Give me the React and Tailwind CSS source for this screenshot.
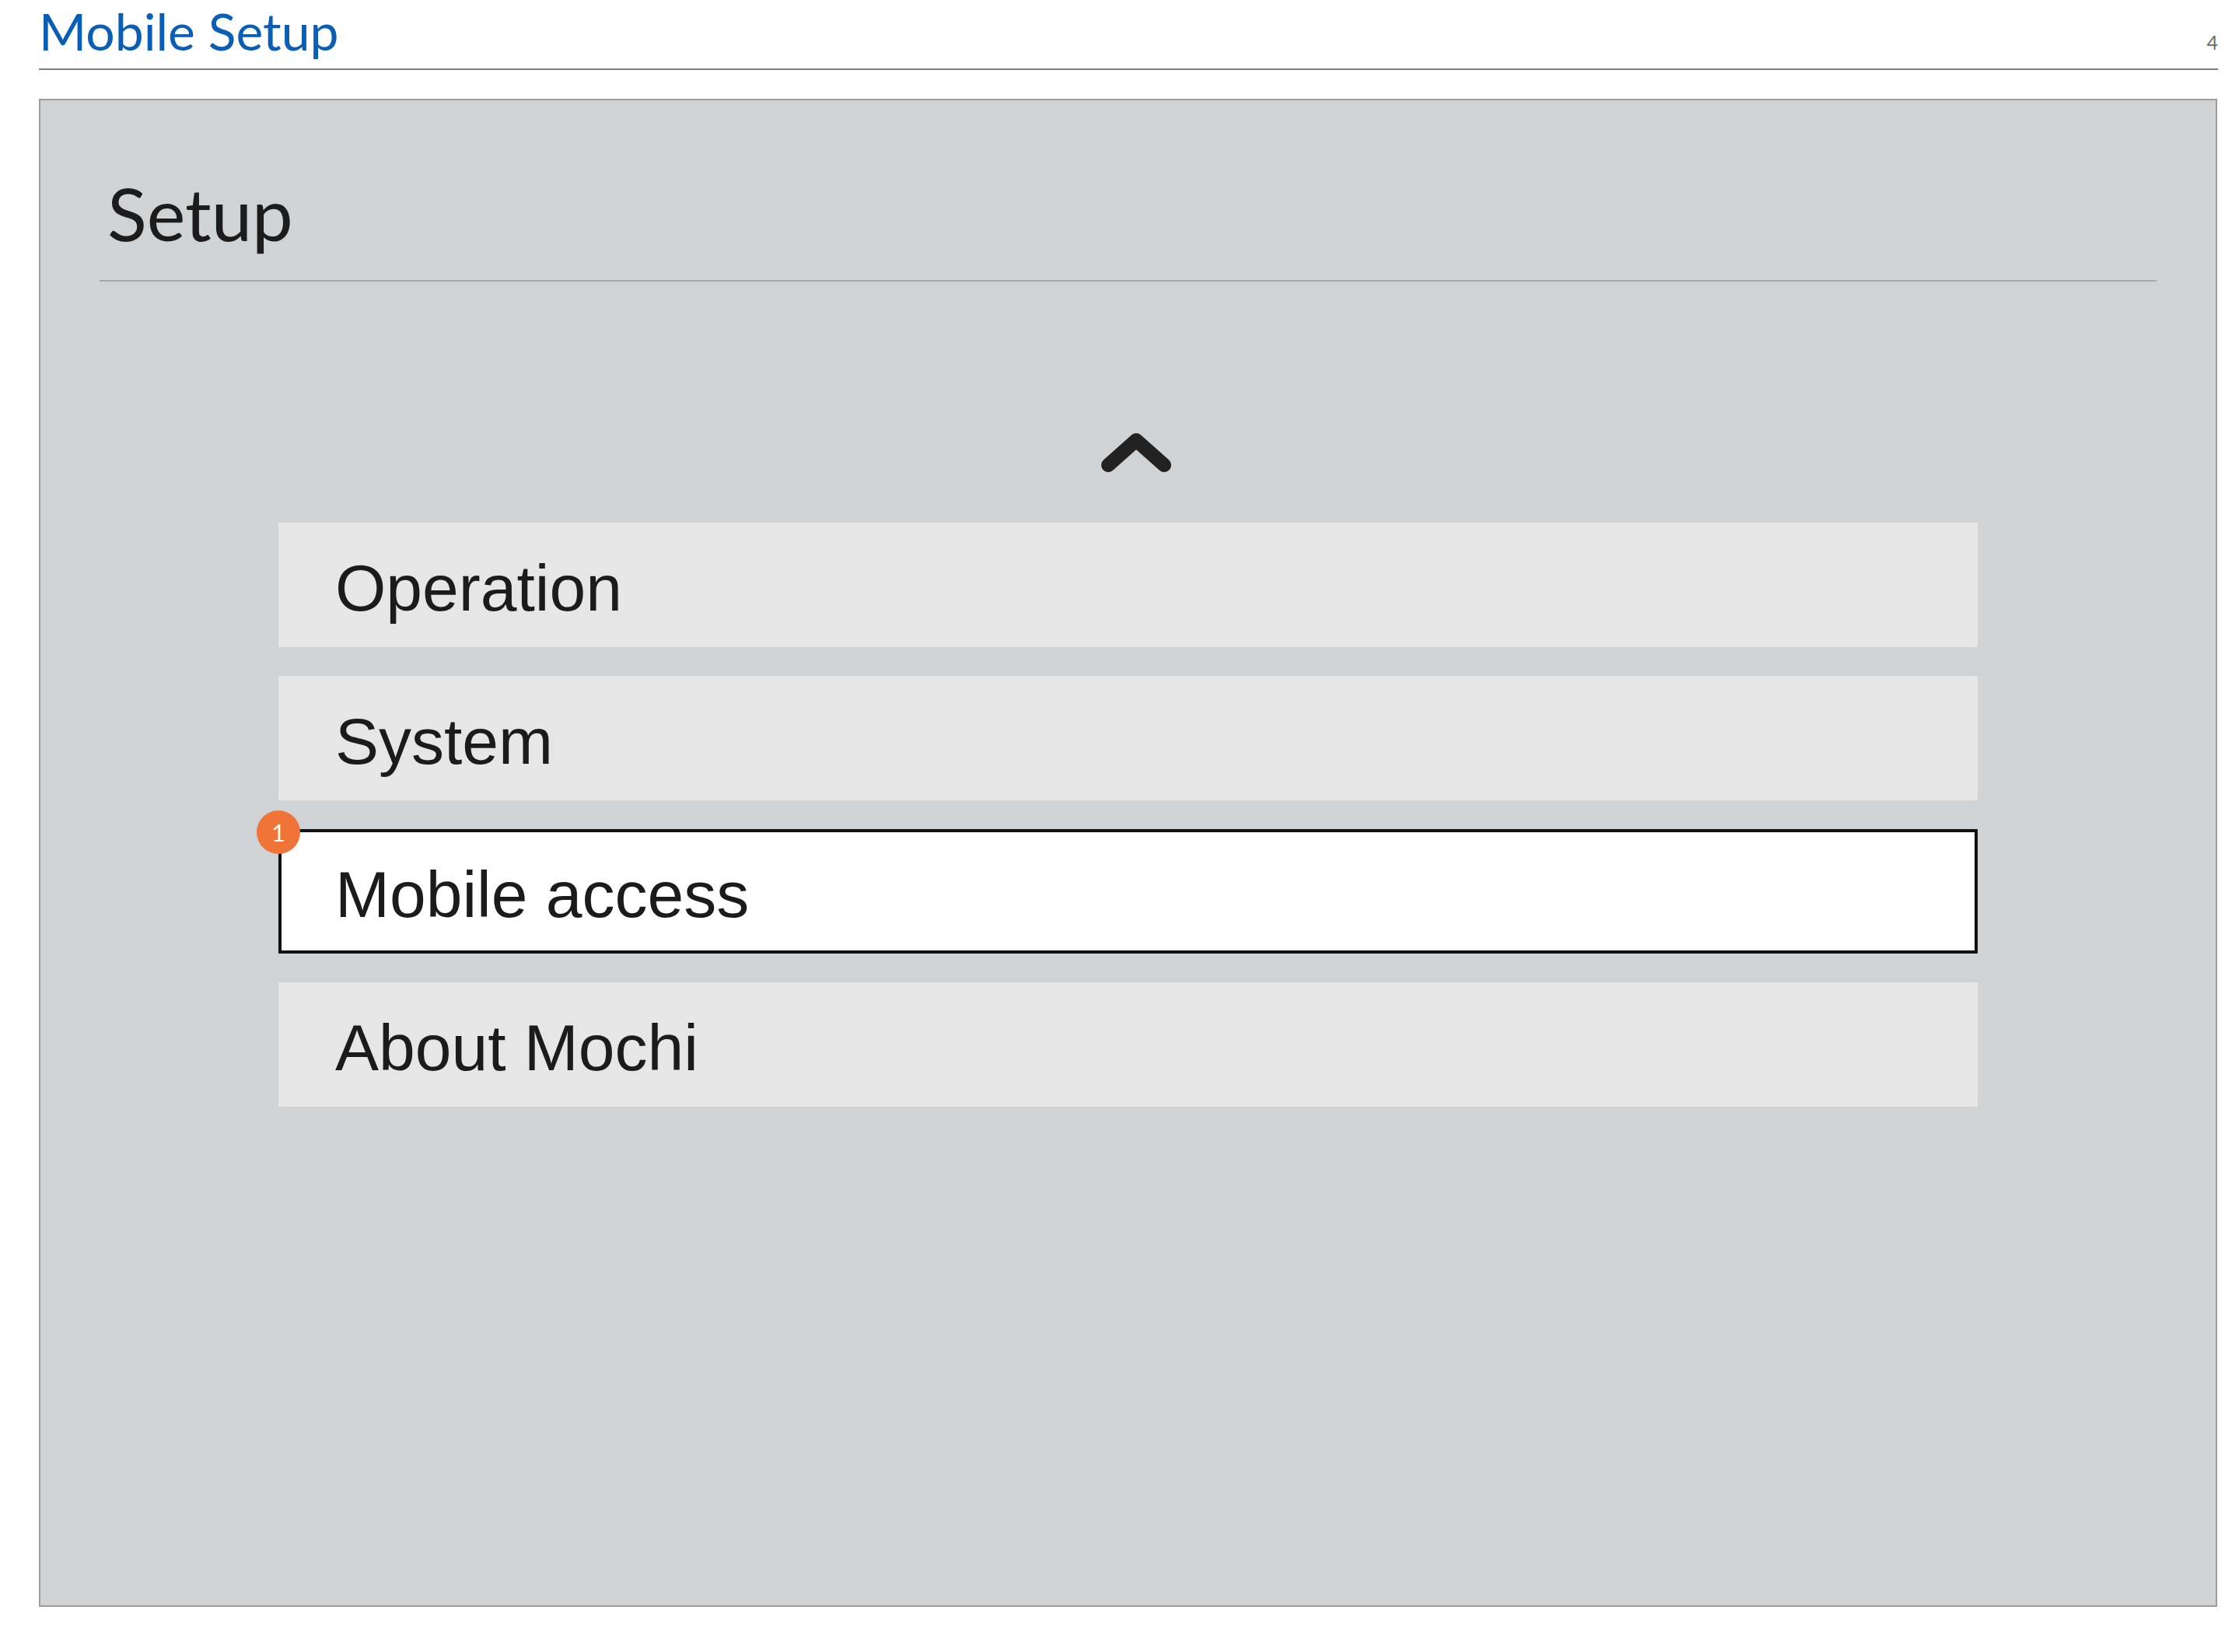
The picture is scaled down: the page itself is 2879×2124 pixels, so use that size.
const ITEMS = [
  { label: 'Operation' },
  { label: 'System' },
  { label: 'Mobile access', active: true, badge: '1' },
  { label: 'About Mochi' },
]

function ChevronUp() {
  return (
    <svg width="100" height="64" viewBox="0 0 100 64" fill="none">
      <path d="M14 50 L50 18 L86 50" stroke="#222222" strokeWidth="18" strokeLinecap="round" strokeLinejoin="round" />
    </svg>
  )
}

function MenuItem({ label, active, badge }) {
  return (
    <div
      className={
        active
          ? 'relative h-[160px] flex items-center bg-white border-4 border-[#111111] pl-[69px] pt-[8px]'
          : 'relative h-[160px] flex items-center bg-[#e6e6e6] pl-[73px] pt-[8px]'
      }
    >
      {badge && (
        <span
          className="absolute left-[-32px] top-[-28px] w-[56px] h-[56px] rounded-full bg-[#f07438] flex items-center justify-center text-white text-[30px] leading-none"
          style={{ fontFamily: 'Lato, "Liberation Sans", sans-serif' }}
        >
          {badge}
        </span>
      )}
      <span
        className="text-[84px] leading-none text-[#1b1b1b]"
        style={{ fontFamily: '"Liberation Sans", Arial, sans-serif' }}
      >
        {label}
      </span>
    </div>
  )
}

export default function App() {
  return (
    <div className="min-h-screen bg-white pl-[50px] pr-[27px] pb-[58px]" style={{ fontFamily: 'Lato, "Open Sans", sans-serif' }}>
      {/* page header */}
      <div className="h-[90px] flex justify-between border-b-2 border-[#7d7d7d]">
        <h1 className="pt-[7px] text-[66px] leading-none text-[#0b5eb5]">Mobile Setup</h1>
        <span className="pt-[42px] text-[25px] leading-none text-[#6b6b6b]">4</span>
      </div>

      {/* screen mock */}
      <div className="mt-[37px] h-[1939px] w-[2801px] border-2 border-[#9b9d9f] bg-[#d0d3d6] px-[76px] pt-[98px]">
        <div className="border-b-2 border-[#a6a9ac] pb-[39px] pl-[10px]">
          <h2 className="text-[94px] leading-none text-[#1c1c1c]">Setup</h2>
        </div>

        <div className="mt-[186px] flex justify-center pl-[20px]">
          <ChevronUp />
        </div>

        <div className="mt-[60px] mx-auto w-[2185px] flex flex-col gap-[37px]">
          {ITEMS.map((it) => (
            <MenuItem key={it.label} {...it} />
          ))}
        </div>
      </div>
    </div>
  )
}
